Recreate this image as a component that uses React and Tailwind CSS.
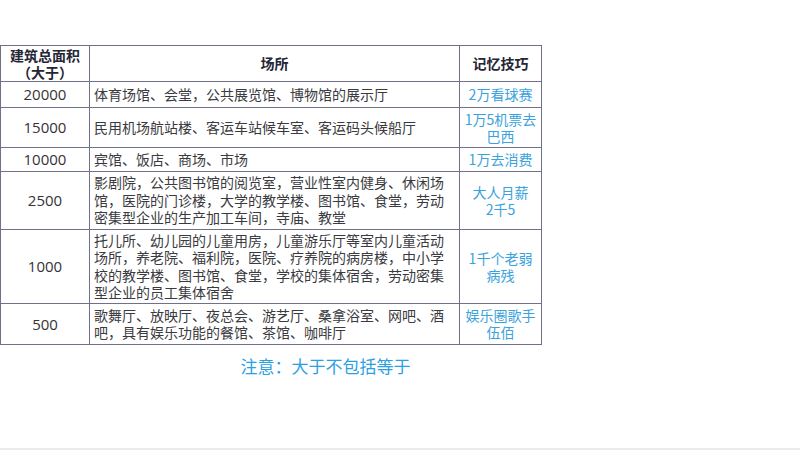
export default function App() {
  const rows = [
    { n: "20000", h: "h-[26px]", place: ["体育场馆、会堂，公共展览馆、博物馆的展示厅"], tip: ["2万看球赛"] },
    { n: "15000", h: "h-[40px]", place: ["民用机场航站楼、客运车站候车室、客运码头候船厅"], tip: ["1万5机票去", "巴西"] },
    { n: "10000", h: "h-[24px]", place: ["宾馆、饭店、商场、市场"], tip: ["1万去消费"] },
    {
      n: "2500",
      h: "h-[58px]",
      place: [
        "影剧院，公共图书馆的阅览室，营业性室内健身、休闲场",
        "馆，医院的门诊楼，大学的教学楼、图书馆、食堂，劳动",
        "密集型企业的生产加工车间，寺庙、教堂",
      ],
      tip: ["大人月薪", "2千5"],
    },
    {
      n: "1000",
      h: "h-[74px]",
      place: [
        "托儿所、幼儿园的儿童用房，儿童游乐厅等室内儿童活动",
        "场所，养老院、福利院，医院、疗养院的病房楼，中小学",
        "校的教学楼、图书馆、食堂，学校的集体宿舍，劳动密集",
        "型企业的员工集体宿舍",
      ],
      tip: ["1千个老弱", "病残"],
    },
    {
      n: "500",
      h: "h-[41px]",
      place: ["歌舞厅、放映厅、夜总会、游艺厅、桑拿浴室、网吧、酒", "吧，具有娱乐功能的餐馆、茶馆、咖啡厅"],
      tip: ["娱乐圈歌手", "伍佰"],
    },
  ];
  const cjk = "font-['Noto_Sans_CJK_SC','Noto_Sans',sans-serif]";
  return (
    <div className={`w-[800px] h-[450px] bg-white relative overflow-hidden ${cjk}`}>
      <div className="pt-[45px]">
        <table className="border-collapse table-fixed w-[541px]">
          <colgroup>
            <col className="w-[89px]" />
            <col className="w-[370px]" />
            <col className="w-[82px]" />
          </colgroup>
          <thead>
            <tr className="h-[36px]">
              <th className="border-[1.5px] border-[#70708a] text-[14px] leading-[17px] font-bold text-[#252535] text-center align-middle p-0">
                建筑总面积<br />（大于）
              </th>
              <th className="border-[1.5px] border-[#70708a] text-[14px] font-bold text-[#252535] text-center align-middle p-0">场所</th>
              <th className="border-[1.5px] border-[#70708a] text-[14px] font-bold text-[#252535] text-center align-middle p-0">记忆技巧</th>
            </tr>
          </thead>
          <tbody>
            {rows.map((r) => (
              <tr key={r.n} className={r.h}>
                <td className="border-[1.5px] border-[#70708a] text-center align-middle p-0 text-[15px] text-[#333338] font-['Open_Sans','Noto_Sans',sans-serif]">
                  {r.n}
                </td>
                <td className="border-[1.5px] border-[#70708a] align-middle pl-[4px] pr-0 py-0 text-[14px] leading-[17.5px] text-[#3a3a40] whitespace-nowrap">
                  {r.place.map((l, i) => (
                    <div key={i}>{l}</div>
                  ))}
                </td>
                <td className="border-[1.5px] border-[#70708a] text-center align-middle p-0 text-[14px] leading-[17px] text-[#3aa2dc] whitespace-nowrap">
                  {r.tip.map((l, i) => (
                    <div key={i}>{l}</div>
                  ))}
                </td>
              </tr>
            ))}
          </tbody>
        </table>
        <div className="w-[651px] text-center mt-[9px] text-[17px] leading-[24px] text-[#2aa0e4]">注意：大于不包括等于</div>
      </div>
      <div className="absolute left-0 right-0 bottom-0 h-[2px] bg-[#ebebeb]" />
    </div>
  );
}
